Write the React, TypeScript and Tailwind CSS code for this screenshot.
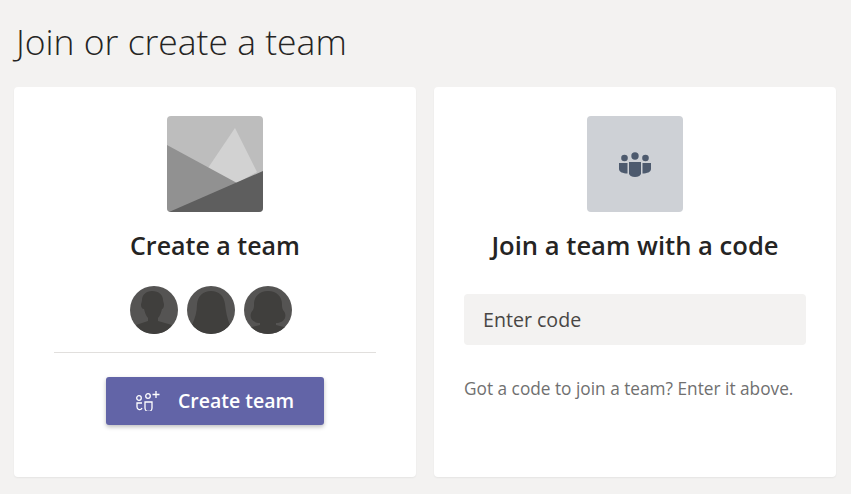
const font = { fontFamily: '"Open Sans", "Noto Sans", sans-serif' };

function TeamPicture() {
  return (
    <svg viewBox="0 0 96 96" className="h-24 w-24 rounded">
      <rect width="96" height="96" fill="#bdbdbd" />
      <polygon points="68,12 90,56 68,68 41,52" fill="#d2d2d2" />
      <polygon points="0,29 70,67 10,96 0,96" fill="#919191" />
      <polygon points="96,55 96,96 2,96" fill="#5e5e5e" />
    </svg>
  );
}

function Avatar({ kind }: { kind: number }) {
  return (
    <svg viewBox="0 0 48 48" className="h-12 w-12 rounded-full">
      <rect width="48" height="48" fill="#555453" />
      {kind === 0 && (
        <path
          d="M22 5c7 0 11 4 11 9 0 1 1 3 1 5s-1 4-2 4c-1 4-2 7-4 9v3l14 4c-5 7-11 9-18 9s-14-3-18-9l12-4v-3c-2-2-3-5-4-9-2 0-3-2-3-4s1-3 1-5c0-5 4-9 10-9z"
          fill="#403f3d"
        />
      )}
      {kind === 1 && (
        <path
          d="M24 5c8 0 13 5 14 13 1 8 2 14 5 21-5 6-12 9-19 9S10 45 5 39c3-7 5-13 5-21 1-8 6-13 14-13z"
          fill="#403f3d"
        />
      )}
      {kind === 2 && (
        <path
          d="M24 5c9 0 14 6 14 13 0 2 0 4 1 6 2 2 3 5 2 8-1 3-5 5-9 5v2l12 3c-5 4-13 6-20 6S9 46 4 42l12-3v-2c-4 0-8-2-9-5-1-3 0-6 2-8 1-2 1-4 1-6 0-7 5-13 14-13z"
          fill="#403f3d"
        />
      )}
    </svg>
  );
}

function JoinIcon() {
  return (
    <svg viewBox="0 0 32 25" className="h-[25px] w-[32px]" fill="#4d5a6e">
      <circle cx="16" cy="4" r="3.700" />
      <circle cx="5.500" cy="6" r="3.300" />
      <circle cx="26.500" cy="6" r="3.300" />
      <path d="M10 10h12v11.500a6 3.500 0 0 1-12 0z" />
      <path d="M0 11h8.500v10.500C4 21.500 0 20 0 17z" />
      <path d="M23.500 11H32v6c0 3-4 4.500-8.500 4.500z" />
    </svg>
  );
}

function CreateIcon() {
  return (
    <svg viewBox="0 0 25 20" className="h-5 w-[25px]" fill="none" stroke="#fff" strokeWidth="1.300">
      <circle cx="3" cy="7" r="2.300" />
      <circle cx="12" cy="5" r="2.300" />
      <path d="M6 12H1v4a2.600 2.600 0 0 0 5 1" />
      <path d="M9 11h7v6a3.500 3.500 0 0 1-7 0z" />
      <path d="M16.500 3.500h7M20 0v7" />
    </svg>
  );
}

export default function App() {
  return (
    <div className="h-[494px] w-[851px] overflow-hidden bg-[#f3f2f1] px-[14px] text-[#252423]" style={font}>
      <h1 className="h-[87px] pt-4 pl-[2px] text-[35.500px] leading-[50px] font-light">Join or create a team</h1>

      <div className="flex gap-[18px]">
        {/* Create card */}
        <div className="flex h-[390px] w-[402px] flex-col items-center rounded bg-white px-10 pt-[29px] shadow-[0_1px_2px_rgba(0,0,0,0.06)]">
          <TeamPicture />
          <h2 className="mt-4 text-[25px] leading-[34px] font-semibold">Create a team</h2>
          <div className="mt-6 mr-2 flex gap-[9px]">
            <Avatar kind={0} />
            <Avatar kind={1} />
            <Avatar kind={2} />
          </div>
          <div className="mt-[18px] w-full border-t border-[#e1dfdd]" />
          <button className="mt-6 flex h-12 w-[218px] items-center gap-[17px] rounded-[3px] bg-[#6264a7] pl-[30px] text-[19.500px] font-semibold text-white shadow-[0_2px_4px_rgba(0,0,0,0.25)]">
            <CreateIcon />
            Create team
          </button>
        </div>

        {/* Join card */}
        <div className="flex h-[390px] w-[402px] flex-col items-center rounded bg-white px-[30px] pt-[29px] shadow-[0_1px_2px_rgba(0,0,0,0.06)]">
          <div className="flex h-24 w-24 items-center justify-center rounded bg-[#ced1d6]">
            <JoinIcon />
          </div>
          <h2 className="mt-[17px] text-[25.600px] leading-[34px] font-semibold">Join a team with a code</h2>
          <div className="mt-[31px] flex h-[51px] w-full items-center rounded bg-[#f3f2f1] px-[19px] text-[19.600px] text-[#484644]">
            Enter code
          </div>
          <p className="mt-[32px] w-full text-[17.250px] leading-6 text-[#707070]">Got a code to join a team? Enter it above.</p>
        </div>
      </div>
    </div>
  );
}
